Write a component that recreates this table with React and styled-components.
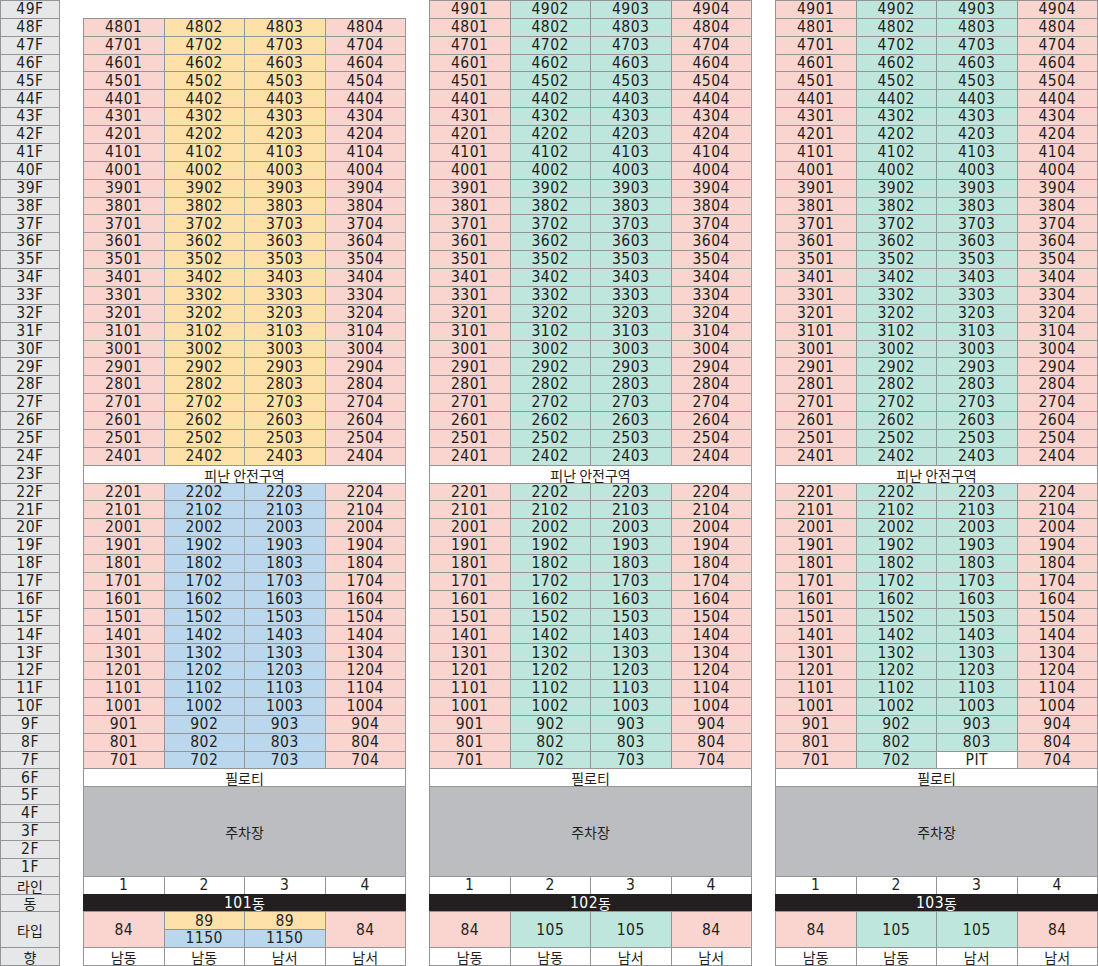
import React from "react";
import styled, { createGlobalStyle } from "styled-components";

const Global = createGlobalStyle`
  html, body { margin: 0; padding: 0; background: #ffffff; }
  body {
    font-family: "Liberation Sans Narrow", "DejaVu Sans Condensed", Roboto, "Noto Sans CJK KR", sans-serif;
    color: #231f20;
  }
`;

const LINE = "#959595";
const COLORS = {
  pink: "#fad4cf",
  peach: "#fee0a9",
  blue: "#bad7ee",
  mint: "#bee6dc",
  gray: "#bcbdc0",
  white: "#ffffff",
  black: "#231f20",
  label: "#e6e7e8",
};

const Page = styled.div`
  display: flex;
  gap: 23px;
  width: 1098px;
  height: 966px;
`;

const LabelColumn = styled.div`
  box-sizing: border-box;
  width: 60px;
  height: 966px;
  padding: 1px;
  display: grid;
  grid-template-rows: repeat(54, 1fr);
  gap: 1px;
`;

const Label = styled.div`
  grid-row: span ${(p) => p.$rows || 1};
  min-height: 0;
  background: ${COLORS.label};
  box-shadow: 0 0 0 1px ${LINE};
  display: flex;
  align-items: center;
  justify-content: center;
  padding-top: 1px;
  font-size: 15.5px;
  line-height: 1;
  letter-spacing: 0.5px;
  font-family: "Liberation Sans Narrow", "DejaVu Sans Condensed", Roboto, "Noto Sans CJK KR", sans-serif;
`;

const Building = styled.div`
  box-sizing: border-box;
  width: 323px;
  height: 966px;
  padding: 1px;
  display: grid;
  grid-template-columns: repeat(4, 1fr);
  grid-template-rows: repeat(54, 1fr);
  gap: 1px;
`;

const Spacer = styled.div`
  grid-column: 1 / -1;
`;

const Cell = styled.div`
  grid-column: span ${(p) => p.$cols || 1};
  grid-row: span ${(p) => p.$rows || 1};
  min-height: 0;
  background: ${(p) => COLORS[p.$bg || "white"]};
  color: ${(p) => (p.$bg === "black" ? "#ffffff" : "#231f20")};
  box-shadow: 0 0 0 1px ${(p) => (p.$bg === "black" ? COLORS.black : LINE)};
  display: flex;
  align-items: center;
  justify-content: center;
  padding-top: 1px;
  font-size: 15.5px;
  line-height: 1;
  letter-spacing: 0.5px;
  white-space: nowrap;
  font-family: "Liberation Sans Narrow", "DejaVu Sans Condensed", Roboto, "Noto Sans CJK KR", sans-serif;
`;

const Hangul = styled.span`
  display: inline-block;
  font-family: "Noto Sans CJK KR", sans-serif;
  font-size: 14px;
  line-height: 1;
  letter-spacing: 0;
`;

const BUILDINGS = [
  { name: "101", top: 48, mid: (f) => (f >= 24 ? "peach" : "blue"), pit: false, types: "split" },
  { name: "102", top: 49, mid: () => "mint", pit: false, types: "mint" },
  { name: "103", top: 49, mid: () => "mint", pit: true, types: "mint" },
];

const FLOORS = Array.from({ length: 49 }, (_, i) => 49 - i);
const DIRECTIONS = ["남동", "남동", "남서", "남서"];

function unitColor(b, floor, line) {
  if (line === 1 || line === 4) return "pink";
  return b.mid(floor);
}

function unitRow(b, f, rows) {
  for (let l = 1; l <= 4; l++) {
    if (b.pit && f === 7 && l === 3) {
      rows.push(<Cell key={`${f}-${l}`}>PIT</Cell>);
    } else {
      rows.push(
        <Cell key={`${f}-${l}`} $bg={unitColor(b, f, l)}>
          {`${f}0${l}`}
        </Cell>
      );
    }
  }
}

function BuildingBlock({ b }) {
  const rows = [];
  if (b.top < 49) rows.push(<Spacer key="sp" />);
  for (let f = b.top; f >= 24; f--) unitRow(b, f, rows);
  rows.push(
    <Cell key="safe" $cols={4}>
      <Hangul>피난 안전구역</Hangul>
    </Cell>
  );
  for (let f = 22; f >= 7; f--) unitRow(b, f, rows);
  rows.push(
    <Cell key="piloti" $cols={4}>
      <Hangul>필로티</Hangul>
    </Cell>
  );
  rows.push(
    <Cell key="park" $cols={4} $rows={5} $bg="gray">
      <Hangul>주차장</Hangul>
    </Cell>
  );
  for (let l = 1; l <= 4; l++) rows.push(<Cell key={`line-${l}`}>{l}</Cell>);
  rows.push(
    <Cell key="dong" $cols={4} $bg="black">
      {b.name}
      <Hangul>동</Hangul>
    </Cell>
  );
  if (b.types === "split") {
    rows.push(<Cell key="t1" $rows={2} $bg="pink">84</Cell>);
    rows.push(<Cell key="t2a" $bg="peach">89</Cell>);
    rows.push(<Cell key="t3a" $bg="peach">89</Cell>);
    rows.push(<Cell key="t4" $rows={2} $bg="pink">84</Cell>);
    rows.push(<Cell key="t2b" $bg="blue">1150</Cell>);
    rows.push(<Cell key="t3b" $bg="blue">1150</Cell>);
  } else {
    rows.push(<Cell key="t1" $rows={2} $bg="pink">84</Cell>);
    rows.push(<Cell key="t2" $rows={2} $bg="mint">105</Cell>);
    rows.push(<Cell key="t3" $rows={2} $bg="mint">105</Cell>);
    rows.push(<Cell key="t4" $rows={2} $bg="pink">84</Cell>);
  }
  DIRECTIONS.forEach((d, i) =>
    rows.push(
      <Cell key={`dir-${i}`}>
        <Hangul>{d}</Hangul>
      </Cell>
    )
  );
  return <Building>{rows}</Building>;
}

export default function App() {
  return (
    <>
      <Global />
      <Page>
        <LabelColumn>
          {FLOORS.map((f) => (
            <Label key={f}>{f}F</Label>
          ))}
          <Label><Hangul>라인</Hangul></Label>
          <Label><Hangul>동</Hangul></Label>
          <Label $rows={2}><Hangul>타입</Hangul></Label>
          <Label><Hangul>향</Hangul></Label>
        </LabelColumn>
        {BUILDINGS.map((b) => (
          <BuildingBlock key={b.name} b={b} />
        ))}
      </Page>
    </>
  );
}
